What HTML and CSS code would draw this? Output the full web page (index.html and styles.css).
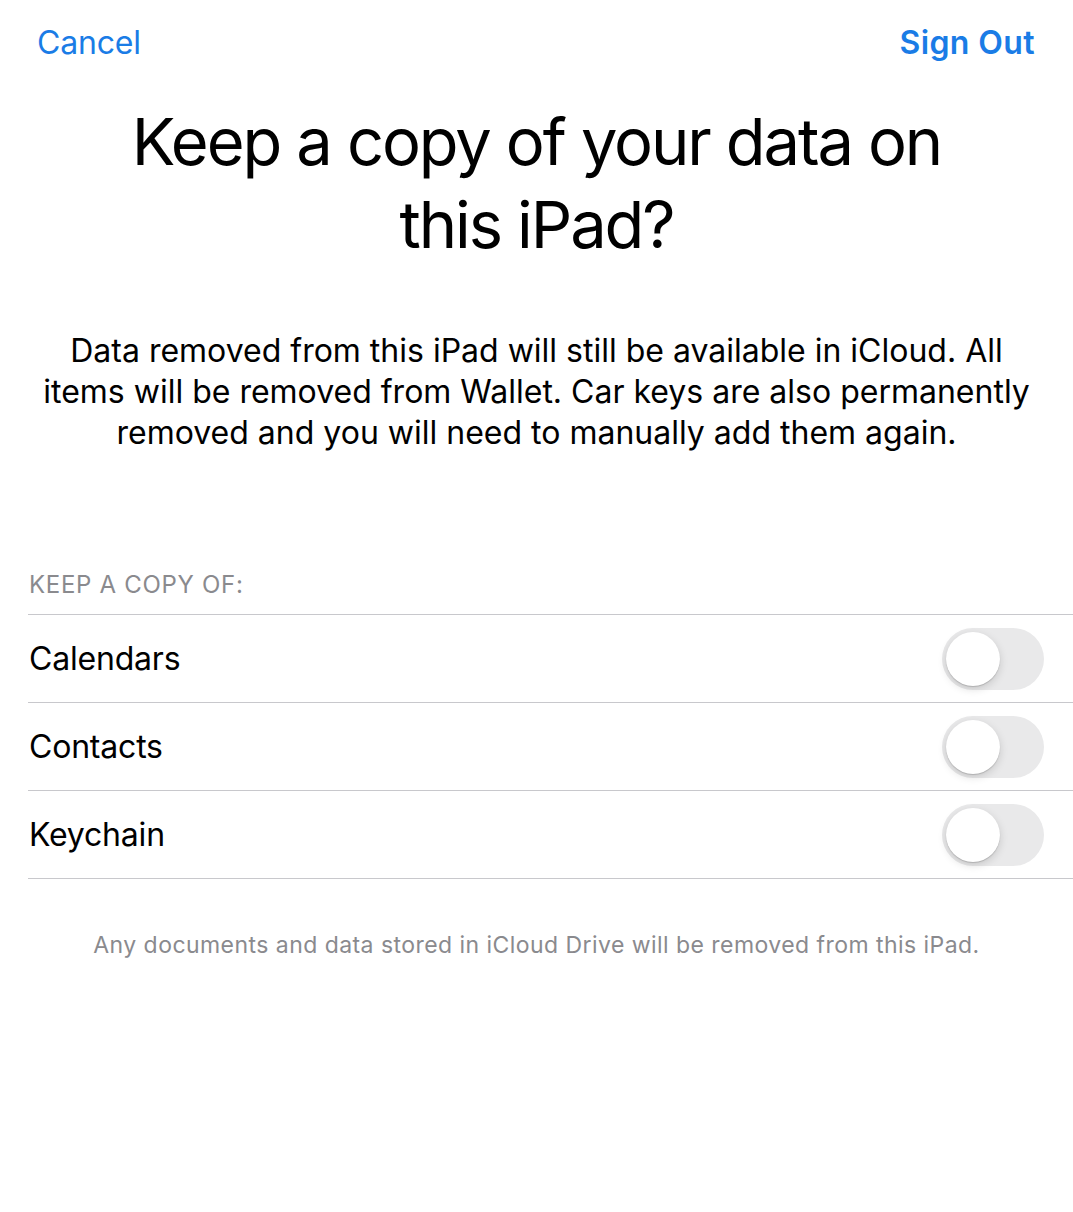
FILE: index.html
```html
<!DOCTYPE html>
<html lang="en">
<head>
    <meta charset="UTF-8">
    <meta name="viewport" content="width=device-width, initial-scale=1.0">
    <title>Sign Out</title>
    <link rel="stylesheet" href="styles.css">
</head>
<body>
    <div class="sheet">
        <div class="nav-bar">
            <a href="#" class="nav-button">Cancel</a>
            <a href="#" class="nav-button nav-button-bold">Sign Out</a>
        </div>

        <h1 class="title">Keep a copy of your data on this iPad?</h1>

        <p class="message">Data removed from this iPad will still be available in iCloud. All items will be removed from Wallet. Car keys are also permanently removed and you will need to manually add them again.</p>

        <div class="section">
            <div class="section-header">KEEP A COPY OF:</div>
            <div class="list">
                <div class="list-row">
                    <span class="row-label">Calendars</span>
                    <span class="switch"><span class="knob"></span></span>
                </div>
                <div class="list-row">
                    <span class="row-label">Contacts</span>
                    <span class="switch"><span class="knob"></span></span>
                </div>
                <div class="list-row">
                    <span class="row-label">Keychain</span>
                    <span class="switch"><span class="knob"></span></span>
                </div>
            </div>
            <div class="section-footer">Any documents and data stored in iCloud Drive will be removed from this iPad.</div>
        </div>
    </div>
</body>
</html>
```

FILE: styles.css
```css
body {
    margin: 0;
    background-color: #ffffff;
    color: #000000;
    font-family: Inter, "Noto Sans", sans-serif;
}

.sheet {
    width: 1073px;
    min-height: 1212px;
}

.nav-bar {
    display: flex;
    justify-content: space-between;
    align-items: center;
    padding: 20px 38px 0 37px;
    height: 44px;
}

.nav-button {
    color: #1a7ce6;
    font-size: 32px;
    text-decoration: none;
    letter-spacing: -0.2px;
}

.nav-button-bold {
    font-weight: 600;
    letter-spacing: 0.4px;
}

.title {
    margin: 36px auto 0 auto;
    max-width: 900px;
    font-size: 65px;
    font-weight: 400;
    line-height: 83px;
    text-align: center;
    letter-spacing: -2.1px;
}

.message {
    margin: 64px auto 0 auto;
    max-width: 1010px;
    font-size: 32px;
    line-height: 41px;
    text-align: center;
    letter-spacing: 0;
}

.section {
    margin-top: 117px;
    padding-left: 28px;
}

.section-header {
    padding-left: 1px;
    font-size: 24px;
    color: #8a8a8e;
    line-height: 30px;
    letter-spacing: 0.7px;
    margin-bottom: 14px;
}

.list {
    border-top: 1px solid #c8c8cc;
}

.list-row {
    display: flex;
    justify-content: space-between;
    align-items: center;
    height: 87px;
    border-bottom: 1px solid #c8c8cc;
    padding-right: 29px;
}

.row-label {
    padding-left: 1px;
    font-size: 32px;
    letter-spacing: -0.2px;
}

.switch {
    position: relative;
    width: 102px;
    height: 62px;
    border-radius: 31px;
    background-color: #e9e9ea;
}

.knob {
    position: absolute;
    top: 4px;
    left: 4px;
    width: 54px;
    height: 54px;
    border-radius: 50%;
    background-color: #ffffff;
    box-shadow: 0 3px 8px rgba(0, 0, 0, 0.15), 0 1px 1px rgba(0, 0, 0, 0.16);
}

.section-footer {
    margin-top: 52px;
    padding-right: 28px;
    font-size: 23px;
    color: #8a8a8e;
    text-align: center;
    letter-spacing: 0.45px;
}
```
